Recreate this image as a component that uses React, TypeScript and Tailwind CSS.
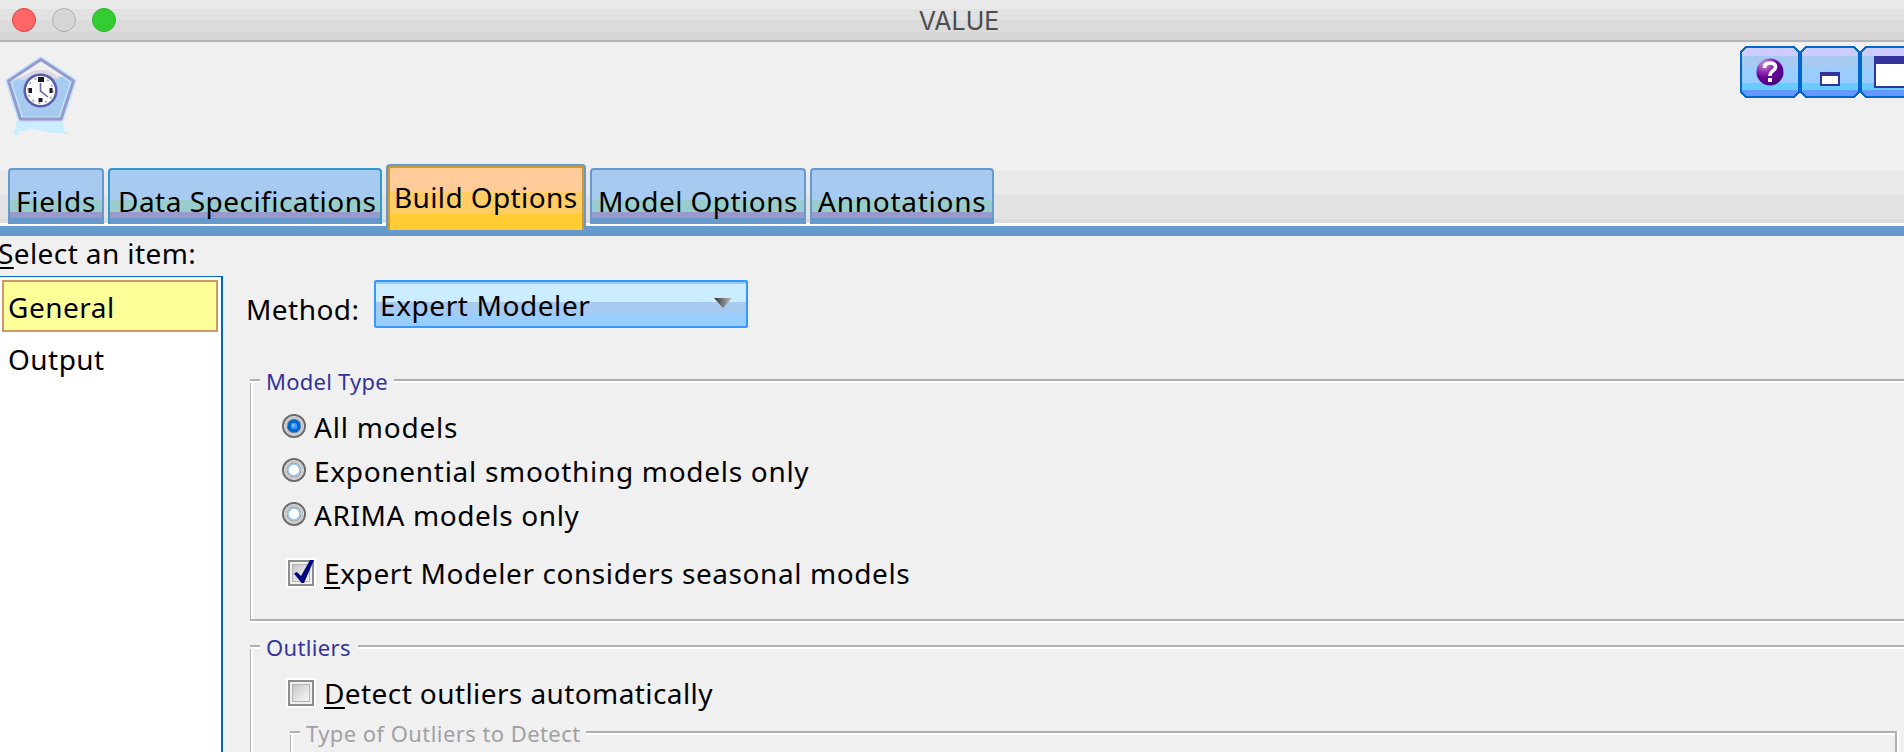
import type { ReactNode } from "react";

function NodeIcon() {
  return (
    <svg width="72" height="82" viewBox="5 55 72 82" className="block">
      <path d="M16 121H62L65 132L68 133V135L64 134L61 133H52L44 131L36 130L31 128L26 131L20 131L18 135H14V130L16 129Z" fill="#ccecff" />
      <path d="M41 59.500L73.500 81L61 119H20.500L8.500 81Z" fill="#a6caf0" stroke="#bfe6ff" strokeWidth="6" strokeLinejoin="round" />
      <path d="M40.500 61L65 76L57 77L50 73H31L22 77L14 80L16 76Z" fill="#f0f0f0" />
      <path d="M35 70H47L54 74L60 79H55L49 75H32L24 80H18L27 74Z" fill="#d9d9e2" />
      <path d="M20 120.500H62" stroke="#ccccff" strokeWidth="2" />
      <path d="M41 59.500L73.500 81L61 119H20.500L8.500 81Z" fill="none" stroke="#9999cc" strokeWidth="3" strokeLinejoin="round" />
      <path d="M23 117.300H58" stroke="#99cccc" strokeWidth="1.500" />
      <circle cx="40.500" cy="90.500" r="15.800" fill="#fff" stroke="#5c5cac" strokeWidth="2.600" />
      <circle cx="40.500" cy="90.500" r="12.500" fill="none" stroke="#9999cc" strokeWidth="1.500" strokeDasharray="2 4.540" />
      <path d="M38 77h6v5h-6zM28.500 88h3.500v5h-3.500zM49.500 88h3v5h-3zM38.500 98h4v4h-4z" fill="#1c1c24" />
      <path d="M40.500 83V91L48 97" fill="none" stroke="#6666a8" strokeWidth="1.600" />
    </svg>
  );
}

function WindowButton({ children }: { children: ReactNode }) {
  return (
    <div className="relative h-[52px] w-[60px] shrink-0">
      <svg width="60" height="52" viewBox="0 0 60 52" shapeRendering="crispEdges" className="block">
        <path d="M6 1H54L59 6V46L54 51H6L1 46V6Z" fill="#99ccff" />
        <path d="M6 2H54L58 6V10H2V6Z" fill="#ccccff" />
        <path d="M2 10H58V21H2Z" fill="#a6caf0" />
        <path d="M2 37H58V44H2Z" fill="#66ccff" />
        <path d="M2 44H58V46L54 50H6L2 46Z" fill="#6699ff" />
        <path d="M6 1H54L59 6V46L54 51H6L1 46V6Z" fill="none" stroke="#0066cc" strokeWidth="2" />
      </svg>
      <div className="absolute inset-0">{children}</div>
    </div>
  );
}

function HelpGlyph() {
  return (
    <svg width="60" height="52" viewBox="0 0 60 52">
      <defs>
        <radialGradient id="orb" cx="0.3" cy="0.2" r="0.850">
          <stop offset="0" stopColor="#c9a0dc" />
          <stop offset="0.350" stopColor="#9433b4" />
          <stop offset="0.600" stopColor="#660099" />
          <stop offset="1" stopColor="#4a0080" />
        </radialGradient>
      </defs>
      <circle cx="30" cy="26" r="13.500" fill="url(#orb)" />
      <path d="M24.500 22C24.500 18.500 27 17 30 17C33.500 17 35.500 18.500 35.500 21C35.500 25 30 24.500 30 30" fill="none" stroke="#fff" strokeWidth="3.600" />
      <rect x="28" y="32" width="4" height="4" fill="#fff" />
    </svg>
  );
}

function Tab({ label, className, text }: { label: string; className: string; text: string }) {
  return (
    <div
      className={`mt-1 h-[56px] shrink-0 rounded-t-[4px] border-x-2 border-t-2 bg-[linear-gradient(#a6caf0_30px,#99cccc_30px,#99cccc_42px,#9999cc_42px,#9999cc_48px,#6699cc_48px)] pt-[15px] whitespace-nowrap ${className}`}
    >
      <span className={`block leading-8 ${text}`}>{label}</span>
    </div>
  );
}

function Radio({ checked }: { checked?: boolean }) {
  return (
    <svg width="24" height="24" viewBox="0 0 24 24" className="block shrink-0">
      <circle cx="12" cy="12" r="11" fill="#f4f4f4" stroke="#6a6a6a" strokeWidth="2" />
      <circle cx="12" cy="12" r="8.600" fill="#fff" stroke="#c4c4c4" strokeWidth="1.600" />
      <circle cx="12" cy="12" r="6.900" fill="#fff" stroke={checked ? "#8c8c8c" : "#999"} strokeWidth="1.200" />
      {checked ? (
        <>
          <circle cx="12" cy="12" r="6.600" fill="#0066cc" />
          <rect x="9" y="9" width="6" height="6" rx="1.500" fill="#3399ff" />
          <rect x="10" y="10" width="2.500" height="3" fill="#80bfff" />
        </>
      ) : (
        <circle cx="12" cy="12" r="5.800" fill="#fff" stroke="#99ccee" strokeWidth="1.400" />
      )}
    </svg>
  );
}

function Checkbox({ checked }: { checked?: boolean }) {
  return (
    <svg width="30" height="30" viewBox="0 0 30 30" className="block shrink-0">
      <defs>
        <linearGradient id="well" x1="0" y1="0" x2="1" y2="1">
          <stop offset="0" stopColor="#c4c4c4" />
          <stop offset="1" stopColor="#fafafa" />
        </linearGradient>
      </defs>
      <rect width="30" height="30" fill="#fff" />
      <rect x="3" y="3" width="24" height="24" fill="#f0f0f0" stroke="#8c8c8c" strokeWidth="2" />
      <rect x="6.500" y="6.500" width="17" height="17" fill="url(#well)" stroke="#b4b4b4" />
      {checked && <path d="M8 15.500L11 14L15 18L24 2H28L18 25H15.500Z" fill="#000080" />}
    </svg>
  );
}

function Rule({ className }: { className: string }) {
  return <div className={`mt-[9px] h-1 border-t-2 border-[#b0b0b0] bg-white ${className}`} />;
}

function GroupHeader({ title, width, text }: { title: string; width: string; text: string }) {
  return (
    <div className="-mt-[9px] -ml-px flex h-6">
      <Rule className="w-[10px] shrink-0" />
      <div className={`-mt-px shrink-0 pl-[6px] text-[22px] leading-6 whitespace-nowrap ${width} ${text}`}>{title}</div>
      <Rule className="grow" />
    </div>
  );
}

function RadioRow({ label, text, checked }: { label: string; text: string; checked?: boolean }) {
  return (
    <div className="flex h-11 pl-[31px]">
      <Radio checked={checked} />
      <span className={`-mt-[3px] ml-2 leading-8 whitespace-nowrap ${text}`}>{label}</span>
    </div>
  );
}

function CheckRow({ first, rest, text, checked }: { first: string; rest: string; text: string; checked?: boolean }) {
  return (
    <div className="flex h-[30px] pl-[35px]">
      <Checkbox checked={checked} />
      <span className={`-mt-px ml-2 leading-8 whitespace-nowrap ${text}`}>
        <span className="underline decoration-2 underline-offset-[3px] [text-decoration-skip-ink:none]">{first}</span>
        {rest}
      </span>
    </div>
  );
}

export default function App() {
  return (
    <div className="flex h-[752px] w-[1904px] flex-col overflow-hidden bg-[#f0f0f0] font-['Noto_Sans',sans-serif] text-[28px] text-black">
      <header className="relative flex h-[42px] shrink-0 items-start justify-center border-b-2 border-[#b4b4b4] bg-[linear-gradient(#e9e9e9_9px,#e2e2e2_9px,#e2e2e2_20px,#dbdbdb_20px,#dbdbdb_32px,#d6d6d6_32px)]">
        <div className="absolute top-2 left-3 flex gap-4">
          <span className="size-6 rounded-full border border-[#e0403f] bg-[#ff6666]" />
          <span className="size-6 rounded-full border border-[#b0b0b0] bg-[#d6d6d6]" />
          <span className="size-6 rounded-full border border-[#2fb52f] bg-[#33cc33]" />
        </div>
        <h1 className="mt-[5px] ml-[14px] font-['Inter',sans-serif] text-[25px] leading-8 text-[#4d4d4d]">VALUE</h1>
      </header>

      <div className="flex h-[122px] shrink-0 justify-between">
        <div className="pt-[13px] pl-[5px]">
          <NodeIcon />
        </div>
        <div className="flex w-[164px] overflow-hidden pt-1">
          <WindowButton>
            <HelpGlyph />
          </WindowButton>
          <WindowButton>
            <div className="mt-[26px] ml-5 h-[14px] w-5 border-2 border-t-4 border-[#333399] bg-white" />
          </WindowButton>
          <WindowButton>
            <div className="mt-[10px] ml-[14px] h-8 w-[40px] border-2 border-t-8 border-[#333399] bg-white" />
          </WindowButton>
        </div>
      </div>

      <nav className="relative flex h-[72px] shrink-0 items-start gap-1 bg-[linear-gradient(#f0f0f0_7px,#e9e9e9_7px,#e9e9e9_31px,#e2e2e2_31px,#e2e2e2_55px,#dbdbdb_55px,#dbdbdb_59px,#ffffff_59px,#ffffff_62px,#6699cc_62px)] pl-2">
        <Tab label="Fields" className="w-24 border-[#6699cc] pl-[6px]" text="tracking-[0.8px]" />
        <Tab label="Data Specifications" className="w-[274px] border-[#3399cc] pl-2" text="tracking-[0.48px]" />
        <div className="h-[66px] w-[200px] shrink-0 rounded-t-[4px] border-x-2 border-t-2 border-[#6699cc] bg-[#6699cc]">
          <div className="h-16 rounded-t-[2px] border-x-2 border-t-2 border-[#cc9933] bg-[linear-gradient(#ffcc99_24px,#ffcc66_24px,#ffcc66_46px,#ffcc33_46px)] pt-[13px] pl-1">
            <span className="block leading-8 tracking-[0.38px] whitespace-nowrap">Build Options</span>
          </div>
        </div>
        <Tab label="Model Options" className="w-[216px] border-[#6699cc] pl-[6px]" text="tracking-[0.45px]" />
        <Tab label="Annotations" className="w-[184px] border-[#6699cc] pl-[6px]" text="tracking-[0.74px]" />
      </nav>

      <main className="flex min-h-0 grow">
        <aside className="flex w-[223px] shrink-0 flex-col">
          <div className="h-10 pt-px">
            <span className="-ml-[2px] block leading-8 tracking-[0.4px] whitespace-nowrap">
              <span className="underline decoration-2 underline-offset-[3px] [text-decoration-skip-ink:none]">S</span>elect an item:
            </span>
          </div>
          <div className="grow border-t border-r-2 border-[#0066cc] bg-white pt-[3px] pl-[2px]">
            <div className="h-[52px] w-[216px] border-2 border-[#cc9966] bg-[#ffff99] pt-[9px] pl-1">
              <span className="block leading-8 tracking-[0.5px]">General</span>
            </div>
            <div className="h-[52px] pt-[11px] pl-[6px]">
              <span className="block leading-8 tracking-[0.45px]">Output</span>
            </div>
          </div>
        </aside>

        <section className="flex min-w-0 grow flex-col pt-11 pl-[27px]">
          <div className="flex h-[99px] shrink-0">
            <span className="mt-[13px] -ml-1 w-[128px] leading-8 tracking-[0.45px]">Method:</span>
            <div className="flex h-12 w-[374px] justify-between rounded-[2px] border-2 border-[#3399ff] bg-[linear-gradient(#99ccff_2px,#ccecff_2px,#ccecff_20px,#a6caf0_20px,#a6caf0_32px,#99ccff_32px)] pt-[7px] pr-[13px] pl-1">
              <span className="leading-8 tracking-[0.58px]">Expert Modeler</span>
              <svg width="20" height="10" viewBox="0 0 20 10" className="mt-[9px]">
                <defs>
                  <linearGradient id="arrow">
                    <stop offset="0" stopColor="#333" />
                    <stop offset="1" stopColor="#c0c0c0" />
                  </linearGradient>
                </defs>
                <path d="M1 0H19L10 10Z" fill="url(#arrow)" />
              </svg>
            </div>
          </div>

          <div className="h-[242px] shrink-0 border-b-2 border-l border-[#b0b0b0] shadow-[inset_2px_0_0_#fff,0_2px_0_#fff]">
            <GroupHeader title="Model Type" width="w-[134px]" text="tracking-[0.24px] text-[#333399]" />
            <div className="pt-5">
              <RadioRow label="All models" text="tracking-[0.78px]" checked />
              <RadioRow label="Exponential smoothing models only" text="tracking-[0.7px]" />
              <RadioRow label="ARIMA models only" text="tracking-[0.6px]" />
            </div>
            <div className="pt-3">
              <CheckRow first="E" rest="xpert Modeler considers seasonal models" text="tracking-[0.59px]" checked />
            </div>
          </div>

          <div className="mt-6 flex min-h-0 grow flex-col border-l border-[#b0b0b0] shadow-[inset_2px_0_0_#fff]">
            <GroupHeader title="Outliers" width="w-[98px]" text="tracking-[0.33px] text-[#333399]" />
            <div className="pt-[18px]">
              <CheckRow first="D" rest="etect outliers automatically" text="tracking-[0.41px]" />
            </div>
            <div className="mt-[23px] mr-[7px] ml-[39px] flex grow flex-col border-r-2 border-l border-[#b0b0b0] shadow-[inset_2px_0_0_#fff,2px_0_0_#fff]">
              <GroupHeader title="Type of Outliers to Detect" width="w-[286px]" text="tracking-[0.43px] text-[#a0a0a4]" />
            </div>
          </div>
        </section>
      </main>
    </div>
  );
}
